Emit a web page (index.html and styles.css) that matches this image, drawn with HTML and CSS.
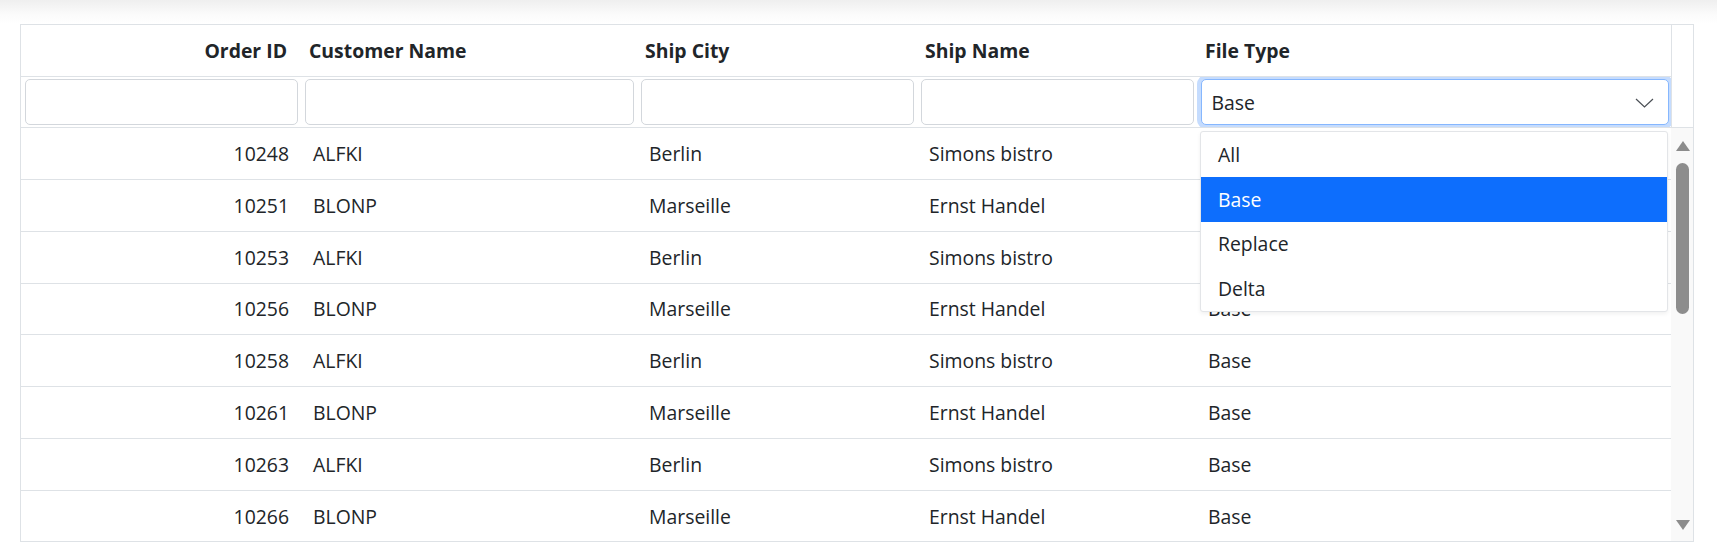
FILE: index.html
```html
<!DOCTYPE html>
<html lang="en">
<head>
<meta charset="utf-8">
<title>Orders grid</title>
<link rel="stylesheet" href="styles.css">
</head>
<body>
<div class="topshade"></div>
<div class="grid">
  <div class="grid-head">
    <div class="head-cols">
      <div class="hrow">
        <div class="hcell c1 right">Order ID</div>
        <div class="hcell c2">Customer Name</div>
        <div class="hcell c3">Ship City</div>
        <div class="hcell c4">Ship Name</div>
        <div class="hcell c5">File Type</div>
      </div>
      <div class="frow">
        <div class="fcell c1"><input class="finput" type="text"></div>
        <div class="fcell c2"><input class="finput" type="text"></div>
        <div class="fcell c3"><input class="finput" type="text"></div>
        <div class="fcell c4"><input class="finput" type="text"></div>
        <div class="fcell c5 fsel">
          <div class="select">
            <span>Base</span>
            <svg class="chev" width="19" height="10" viewBox="0 0 19 10"><polyline points="1,1 9.5,9 18,1" fill="none" stroke="#4a4f55" stroke-width="1.2"/></svg>
          </div>
        </div>
      </div>
    </div>
    <div class="head-gutter"></div>
  </div>
  <div class="grid-body">
    <div class="rows">
      <div class="drow"><div class="dcell c1 right">10248</div><div class="dcell c2">ALFKI</div><div class="dcell c3">Berlin</div><div class="dcell c4">Simons bistro</div><div class="dcell c5">Base</div></div>
      <div class="drow"><div class="dcell c1 right">10251</div><div class="dcell c2">BLONP</div><div class="dcell c3">Marseille</div><div class="dcell c4">Ernst Handel</div><div class="dcell c5">Base</div></div>
      <div class="drow"><div class="dcell c1 right">10253</div><div class="dcell c2">ALFKI</div><div class="dcell c3">Berlin</div><div class="dcell c4">Simons bistro</div><div class="dcell c5">Base</div></div>
      <div class="drow"><div class="dcell c1 right">10256</div><div class="dcell c2">BLONP</div><div class="dcell c3">Marseille</div><div class="dcell c4">Ernst Handel</div><div class="dcell c5">Base</div></div>
      <div class="drow"><div class="dcell c1 right">10258</div><div class="dcell c2">ALFKI</div><div class="dcell c3">Berlin</div><div class="dcell c4">Simons bistro</div><div class="dcell c5">Base</div></div>
      <div class="drow"><div class="dcell c1 right">10261</div><div class="dcell c2">BLONP</div><div class="dcell c3">Marseille</div><div class="dcell c4">Ernst Handel</div><div class="dcell c5">Base</div></div>
      <div class="drow"><div class="dcell c1 right">10263</div><div class="dcell c2">ALFKI</div><div class="dcell c3">Berlin</div><div class="dcell c4">Simons bistro</div><div class="dcell c5">Base</div></div>
      <div class="drow"><div class="dcell c1 right">10266</div><div class="dcell c2">BLONP</div><div class="dcell c3">Marseille</div><div class="dcell c4">Ernst Handel</div><div class="dcell c5">Base</div></div>
    </div>
    <div class="vscroll">
      <div class="arrow up"></div>
      <div class="track"><div class="thumb"></div></div>
      <div class="arrow down"></div>
    </div>
  </div>
  <ul class="dropdown">
    <li class="opt">All</li>
    <li class="opt active">Base</li>
    <li class="opt">Replace</li>
    <li class="opt">Delta</li>
  </ul>
</div>
</body>
</html>
```
FILE: styles.css
```css
* { box-sizing: border-box; }
html, body { margin: 0; padding: 0; background: #fff; }
body {
  font-family: "Segoe UI", "Open Sans", "Noto Sans", sans-serif;
  font-size: 19.4px;
  color: #212529;
}
.topshade {
  height: 24px;
  background: linear-gradient(#efefef, #fbfbfb 60%, #fff);
}
.grid {
  position: relative;
  margin-left: 20px;
  width: 1674px;
  border: 1px solid #dee2e6;
}
.grid-head {
  display: flex;
  border-bottom: 1px solid #dee2e6;
}
.head-cols {
  width: 1651px;
  border-right: 1px solid #dee2e6;
}
.head-gutter { flex: 1; }
.hrow {
  display: flex;
  height: 52px;
  border-bottom: 1px solid #dee2e6;
}
.c1 { width: 280px; }
.c2 { width: 336px; }
.c3 { width: 280px; }
.c4 { width: 280px; }
.c5 { width: 474px; }
.hcell {
  display: flex;
  align-items: center;
  padding-left: 8px;
  font-weight: 700;
  white-space: nowrap;
}
.hcell.right { justify-content: flex-end; padding-left: 0; padding-right: 14px; }
.frow {
  display: flex;
  height: 50px;
}
.fcell {
  padding: 2px 3.5px 0 3.5px;
  overflow: hidden;
}
.fsel { padding: 2px 2px 0 3.5px; }
.finput {
  display: block;
  width: 100%;
  height: 46px;
  border: 1px solid #d3d7dc;
  border-radius: 5px;
  background: #fff;
  font: inherit;
  outline: none;
}
.select {
  display: flex;
  align-items: center;
  justify-content: space-between;
  height: 46px;
  padding: 0 14px 0 10px;
  border: 1px solid #86b7fe;
  border-radius: 5px;
  box-shadow: 0 0 0 4px #c5dcfe;
  background: #fff;
}
.chev { display: block; margin-top: 2px; }
.grid-body {
  display: flex;
  height: 413px;
}
.rows {
  width: 1650px;
  overflow: hidden;
}
.drow {
  display: flex;
  height: 51.85px;
  border-bottom: 1px solid #dee2e6;
}
.dcell {
  display: flex;
  align-items: center;
  padding-left: 12px;
  white-space: nowrap;
}
.dcell.c5 { padding-left: 11px; }
.dcell.right { justify-content: flex-end; padding-left: 0; padding-right: 12px; }
.vscroll {
  flex: 1;
  background: #f9f9f9;
  display: flex;
  flex-direction: column;
  align-items: center;
  padding: 13px 0 11px 1px;
}
.arrow { width: 0; height: 0; border-left: 7.5px solid transparent; border-right: 7.5px solid transparent; }
.arrow.up { border-bottom: 10px solid #8c8c8c; }
.arrow.down { border-top: 10px solid #8c8c8c; }
.track { flex: 1; width: 13px; padding-top: 12px; }
.thumb { width: 13px; height: 151px; border-radius: 7px; background: #8d8d8d; }
.dropdown {
  position: absolute;
  left: 1179px;
  top: 106px;
  width: 468px;
  margin: 0;
  padding: 0;
  list-style: none;
  background: #fff;
  border: 1px solid #e3e5e8;
  border-radius: 3px;
  box-shadow: 0 2px 4px rgba(0,0,0,0.06);
}
.opt {
  height: 44.75px;
  display: flex;
  align-items: center;
  padding-left: 17px;
}
.opt.active { background: #0d6efd; color: #fff; }
```
